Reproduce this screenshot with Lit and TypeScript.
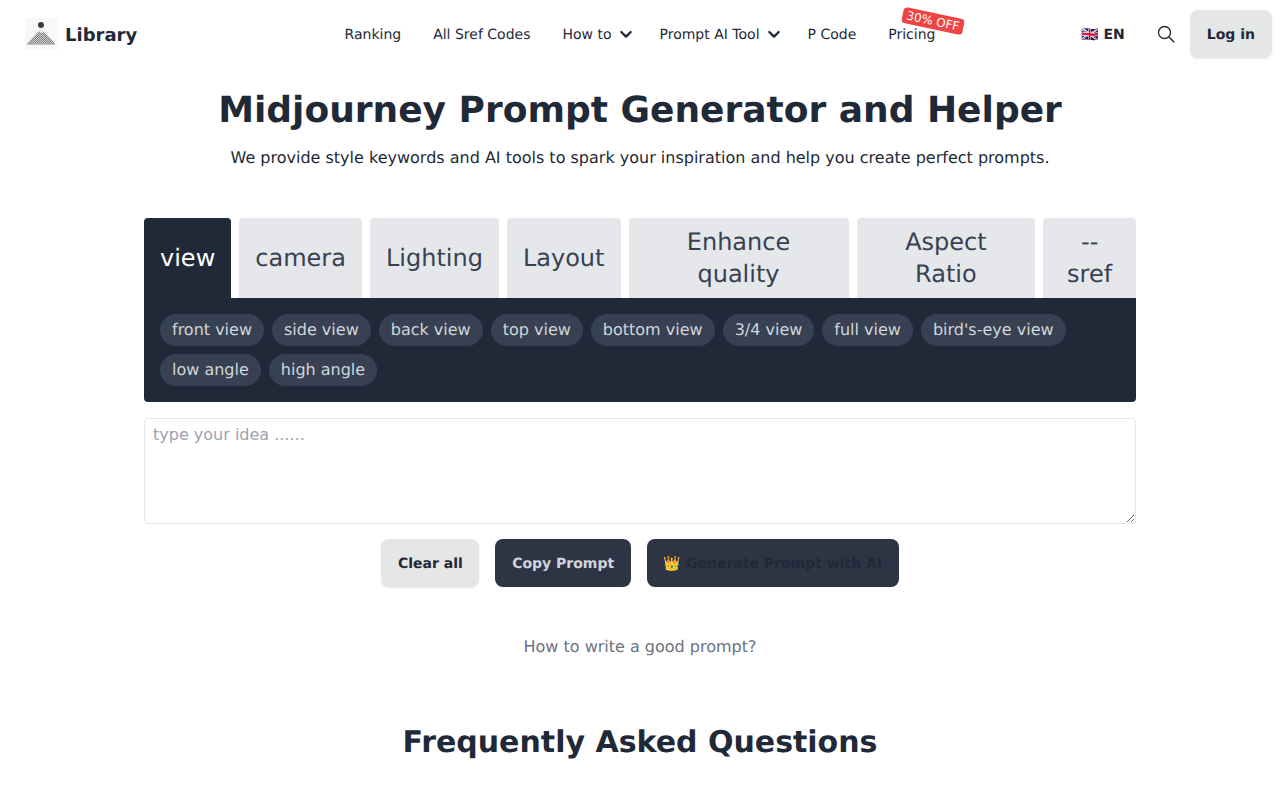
import { LitElement, html, css } from "lit";
import { customElement } from "lit/decorators.js";

const chevron = html`<svg class="chev" viewBox="0 0 24 24" width="16" height="16" fill="none" stroke="currentColor" stroke-width="3.500" stroke-linecap="round" stroke-linejoin="round"><path d="M5 9l7 7 7-7"/></svg>`;

@customElement("app-root")
export class AppRoot extends LitElement {
  static styles = css`
    :host { display: block; font-family: "DejaVu Sans", sans-serif; color: #1f2937; background: #fff; height: 800px; overflow: hidden; text-rendering: geometricPrecision; -webkit-font-smoothing: antialiased; }
    * { box-sizing: border-box; }
    .nav { display: flex; align-items: center; height: 68px; padding: 0 8px; }
    .start { flex: 1 1 50%; display: flex; align-items: center; gap: 8px; font-size: 18px; font-weight: 700; }
    .start span { padding-top: 2px; }
    .logo { display: block; width: 32px; height: 32px; margin-left: 17px; }
    .center { flex: none; display: flex; align-items: center; font-size: 14px; }
    .item { display: flex; align-items: center; padding: 2px 16px 0; height: 36px; position: relative; white-space: nowrap; }
    .item.drop { padding-right: 10px; gap: 6px; }
    .chev { display: block; margin-top: -2px; }
    .badge { position: absolute; left: 30px; top: -3px; background: #ef4444; color: #fff; font-size: 12px; line-height: 16px; padding: 0 4px; border-radius: 4px; transform: rotate(12deg); white-space: nowrap; }
    .end { flex: 1 1 50%; display: flex; align-items: center; justify-content: flex-end; }
    .lang { font-size: 14px; font-weight: 700; padding-top: 2px; margin-right: 32px; white-space: nowrap; }
    .search { display: block; margin-right: 15px; color: #1f2937; }
    .btn { display: flex; align-items: center; justify-content: center; height: 48px; padding: 2px 17px 0; border-radius: 8px; font-size: 14px; font-weight: 700; white-space: nowrap; }
    .light { background: #e5e6e6; color: #1f2937; box-shadow: 0 1px 2px rgba(0,0,0,.1); }
    .dark { background: #2d3545; color: #d1d5db; }
    .gen { color: #1f2937; gap: 5px; }
    main { width: 992px; margin: 0 auto; }
    h1 { margin: 18px 0 0; text-align: center; font-size: 36px; line-height: 50px; font-weight: 700; color: #1f2937; }
    .sub { margin: 10px 0 0; text-align: center; font-size: 16px; line-height: 24px; color: #1f2937; }
    .tabs { display: flex; gap: 8px; margin-top: 48px; }
    .tab { flex: 0 1 auto; height: 80px; padding: 8px 16px; display: flex; align-items: center; justify-content: center; text-align: center; background: #e5e7eb; color: #374151; font-size: 24px; line-height: 32px; border-radius: 4px 4px 0 0; }
    .tab.on { background: #1f2937; color: #fff; }
    .panel { background: #1f2937; border-radius: 0 0 4px 4px; padding: 16px; display: flex; flex-wrap: wrap; gap: 8px; }
    .chip { background: #374151; color: #d1d5db; font-size: 16px; line-height: 24px; height: 32px; padding: 4px 12px; border-radius: 16px; white-space: nowrap; }
    textarea { display: block; width: 100%; height: 106px; margin: 16px 0 0; padding: 4px 8px; border: 1px solid #e5e7eb; border-radius: 4px; font: 16px/24px "DejaVu Sans", sans-serif; color: #1f2937; outline: none; background: #fff; }
    textarea::placeholder { color: #9ca3af; }
    .actions { display: flex; justify-content: center; gap: 16px; margin-top: 15px; }
    .actions .btn { padding-left: 16.7px; padding-right: 16.7px; }
    .howto { margin: 48px 0 0; text-align: center; font-size: 16px; line-height: 24px; color: #6b7280; }
    h2 { margin: 64px 0 0; text-align: center; font-size: 30px; line-height: 40px; font-weight: 700; color: #1f2937; }
  `;

  render() {
    const tabs = ["view", "camera", "Lighting", "Layout", "Enhance quality", "Aspect Ratio", "--sref"];
    const chips = ["front view", "side view", "back view", "top view", "bottom view", "3/4 view", "full view", "bird's-eye view", "low angle", "high angle"];
    return html`
      <header class="nav">
        <div class="start">
          <svg class="logo" viewBox="0 0 32 32">
            <defs><pattern id="dith" width="2" height="2" patternUnits="userSpaceOnUse"><rect width="2" height="2" fill="#d4d4d4"/><rect width="1" height="1" fill="#7a7a7a"/><rect x="1" y="1" width="1" height="1" fill="#7a7a7a"/></pattern></defs>
            <rect width="32" height="32" fill="#f8f8f8"/>
            <circle cx="16" cy="7" r="3" fill="#3a3a3a"/>
            <path d="M16 11l14 14.500h-28z" fill="url(#dith)"/>
            <path d="M16 11l-2.500 2.500 2.500 1.500 2.500-1.500z" fill="#eee"/>
            <path d="M2 26h28" stroke="#888" stroke-width="1"/>
          </svg>
          <span>Library</span>
        </div>
        <nav class="center">
          <div class="item">Ranking</div>
          <div class="item">All Sref Codes</div>
          <div class="item drop">How to ${chevron}</div>
          <div class="item drop">Prompt AI Tool ${chevron}</div>
          <div class="item">P Code</div>
          <div class="item">Pricing<span class="badge">30% OFF</span></div>
        </nav>
        <div class="end">
          <div class="lang">🇬🇧 EN</div>
          <svg class="search" viewBox="0 0 24 24" width="18" height="18" fill="none" stroke="currentColor" stroke-width="1.800"><circle cx="10" cy="10" r="8"/><path d="M16 16l7 7"/></svg>
          <div class="btn light">Log in</div>
        </div>
      </header>
      <main>
        <h1>Midjourney Prompt Generator and Helper</h1>
        <p class="sub">We provide style keywords and AI tools to spark your inspiration and help you create perfect prompts.</p>
        <div class="tabs">${tabs.map((t, i) => html`<div class="tab ${i === 0 ? "on" : ""}">${t}</div>`)}</div>
        <div class="panel">${chips.map((c) => html`<span class="chip">${c}</span>`)}</div>
        <textarea placeholder="type your idea ......"></textarea>
        <div class="actions">
          <div class="btn light">Clear all</div>
          <div class="btn dark">Copy Prompt</div>
          <div class="btn dark gen"><span>👑</span><span>Generate Prompt with AI</span></div>
        </div>
        <p class="howto">How to write a good prompt?</p>
        <h2>Frequently Asked Questions</h2>
      </main>
    `;
  }
}
